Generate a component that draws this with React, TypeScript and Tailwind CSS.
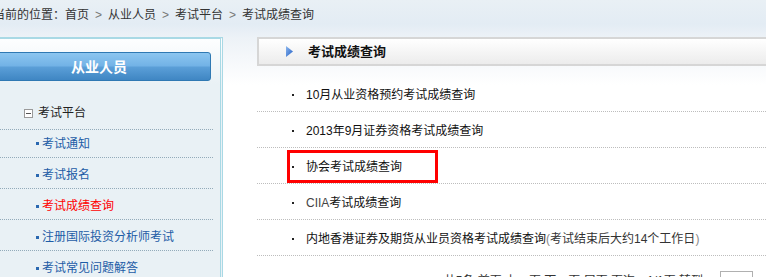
import React from "react";

const sideItems = [
  { label: "考试通知", first: true },
  { label: "考试报名" },
  { label: "考试成绩查询", active: true },
  { label: "注册国际投资分析师考试" },
  { label: "考试常见问题解答" },
];

function Chevron() {
  return <span className="mx-[6px] text-[#777] [font-family:'Liberation_Sans',sans-serif]">&gt;</span>;
}

function PlayIcon() {
  return (
    <svg width="7" height="11" viewBox="0 0 7 11">
      <defs>
        <linearGradient id="tri" x1="0" y1="0" x2="1" y2="1">
          <stop offset="0" stopColor="#8db8ee" />
          <stop offset="1" stopColor="#1f5cc4" />
        </linearGradient>
      </defs>
      <polygon points="0,0 7,5.5 0,11" fill="url(#tri)" />
    </svg>
  );
}

function Row({ children, boxed }: { children: React.ReactNode; boxed?: boolean }) {
  return (
    <li className="relative flex h-[36px] items-center border-b border-dotted border-[#bdbdbd] pl-[35px] pt-[2px]">
      <span className="mr-[12px] h-[2px] w-[2px] bg-[#222]" />
      <span className="text-[#111]">{children}</span>
      {boxed && (
        <span className="absolute left-[30px] top-[2px] h-[33px] w-[151px] border-[3px] border-[#ff0000]" />
      )}
    </li>
  );
}

export default function App() {
  return (
    <div className="h-screen overflow-hidden bg-[linear-gradient(to_bottom,#e9f0f5_0px,#e3ecf4_24px,#edf2f7_38px,#ffffff_85px)] text-[12px] leading-[16px] [font-family:'Liberation_Sans','Noto_Sans_CJK_SC',sans-serif]">
      <div className="flex h-[37px] items-start pt-[7px] text-[#333]">
        <span className="ml-[-7px]">当前的位置：</span>
        <span>首页</span>
        <Chevron />
        <span>从业人员</span>
        <Chevron />
        <span>考试平台</span>
        <Chevron />
        <span>考试成绩查询</span>
      </div>

      <div className="flex">
        <aside className="ml-[-20px] h-[260px] w-[243px] shrink-0 border-r-[3px] border-t-2 border-double border-[#a9d9e5] bg-[linear-gradient(to_bottom,#fdfeff_0px,#e9f1f5_45px)]">
          <div className="ml-[7px] mr-[9px] mt-[13px] flex h-[29px] items-center justify-center rounded-[3px] border border-[#2f79b3] bg-[linear-gradient(to_bottom,#8cc6f0_0%,#72b2e6_48%,#5b9fd8_52%,#3f86c3_100%)] text-[14px] font-bold text-white">
            从业人员
          </div>
          <ul className="mx-[7px] mt-[16px]">
            <li className="flex h-[33px] items-center border-b border-dotted border-[#93abba] pl-[37px] text-[#222]">
              <span className="mr-[5px] flex h-[9px] w-[9px] items-center justify-center border border-[#9a9a9a] bg-white">
                <span className="h-px w-[5px] bg-[#555]" />
              </span>
              考试平台
            </li>
            {sideItems.map((it) => (
              <li
                key={it.label}
                className={
                  "flex items-center border-b border-dotted border-[#93abba] pl-[49px] " +
                  (it.first ? "h-[28px]" : "h-[31px] pt-[4px]")
                }
              >
                <span className="mr-[3px] h-[3px] w-[3px] bg-[#2a68b0]" />
                <span className={it.active ? "text-[#ff0000]" : "text-[#1d5ca6]"}>{it.label}</span>
              </li>
            ))}
          </ul>
        </aside>

        <main className="ml-[34px] flex-1">
          <div className="flex h-[29px] items-center border-2 border-r-0 border-[#d6d6d6] bg-[linear-gradient(to_bottom,#ffffff,#ececec)] pl-[27px]">
            <PlayIcon />
            <span className="ml-[15px] text-[13px] font-bold text-[#111]">考试成绩查询</span>
          </div>
          <ul className="mt-[10px]">
            <Row>10月从业资格预约考试成绩查询</Row>
            <Row>2013年9月证券资格考试成绩查询</Row>
            <Row boxed>协会考试成绩查询</Row>
            <Row>
              <span className="text-[#444]">CIIA</span>考试成绩查询
            </Row>
            <Row>
              内地香港证券及期货从业员资格考试成绩查询
              <span className="text-[#333]">
                <span className="text-[#888]">(</span>考试结束后大约14个工作日<span className="text-[#888]">)</span>
              </span>
            </Row>
          </ul>
          <div className="flex items-start justify-end pr-[13px] pt-[16px] text-[#333]">
            <span className="leading-[18px]">共5条 首页 上一页 下一页 尾页 页次：1/1页 转到：</span>
            <span className="ml-[5px] mt-[-1px] h-[20px] w-[33px] border border-[#b0b0b0] bg-white" />
          </div>
        </main>
      </div>
    </div>
  );
}
